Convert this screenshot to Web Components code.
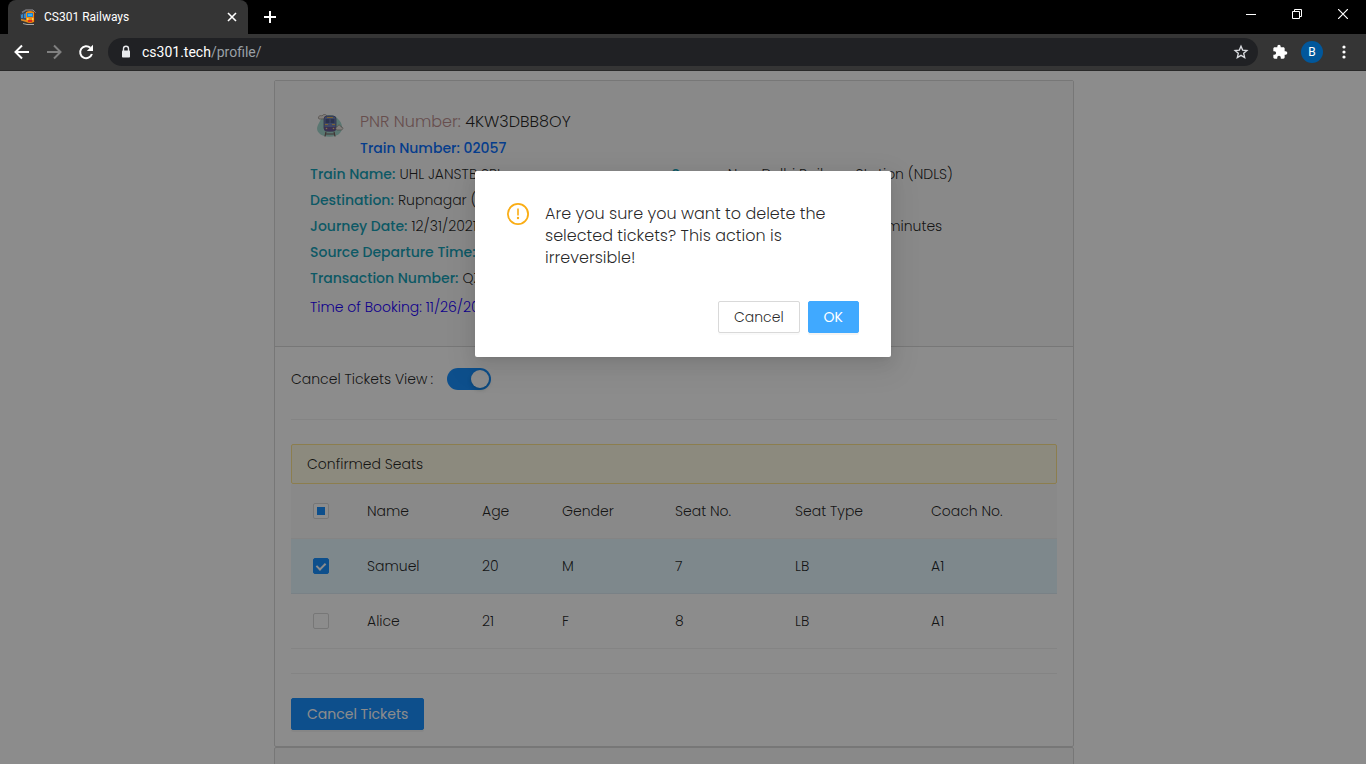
<!DOCTYPE html>
<html lang="en">
<head>
<meta charset="utf-8">
<title>CS301 Railways</title>
<style>
  html, body { margin: 0; height: 100%; overflow: hidden; }
  body { font-family: Poppins, Inter, sans-serif; font-size: 14px; line-height: 22px; font-weight: 300; color: rgba(0,0,0,.85); background: #fff; }
</style>
</head>
<body>
<app-window></app-window>

<template id="t-window">
  <style>
    :host { display: flex; flex-direction: column; height: 100vh; overflow: hidden; }
    .viewport { flex: 1; position: relative; overflow: hidden; display: flex; flex-direction: column; }
  </style>
  <browser-chrome></browser-chrome>
  <div class="viewport">
    <profile-page></profile-page>
    <confirm-dialog>Are you sure you want to delete the selected tickets? This action is irreversible!</confirm-dialog>
  </div>
</template>

<template id="t-chrome">
  <style>
    :host { display: block; background: #000; color: #fff; font-family: "Segoe UI", Roboto, sans-serif; font-size: 12px; font-weight: 400; }
    button { all: unset; display: grid; place-items: center; }
    svg { display: block; }
    .tabs { display: flex; height: 34px; padding-left: 8px; }
    .tab { display: flex; align-items: center; gap: 8px; width: 240px; box-sizing: border-box; padding: 0 8px 0 12px; background: #353535; border-radius: 8px 8px 0 0; }
    .tab span { flex: 1; line-height: 16px; }
    .tab button { width: 16px; height: 16px; }
    .plus { width: 44px; height: 34px; }
    .win { margin-left: auto; display: flex; }
    .win button { width: 46px; height: 28px; }
    .bar { display: flex; align-items: center; height: 36px; background: #353535; border-bottom: 1px solid #292929; padding: 0 6px; }
    .bar > button { width: 32px; height: 32px; }
    .omni { flex: 1; display: flex; align-items: center; height: 28px; margin: 0 6px; padding: 0 8px 0 12px; border-radius: 14px; background: #202124; }
    .url { flex: 1; margin-left: 10px; font-size: 14px; line-height: 20px; color: #9aa0a6; text-decoration: none; }
    .url b { font-weight: 400; color: #fff; }
    .avatar { width: 22px; height: 22px; border-radius: 50%; background: #01579b; display: grid; place-items: center; font-family: Roboto, sans-serif; }
  </style>
  <div class="tabs">
    <div class="tab">
      <svg width="16" height="16" viewBox="0 0 16 16"><path d="M2 3.500 6 1h7" fill="none" stroke="#77777c" stroke-width="1.500"/><path d="M13 1l2.500 3" stroke="#999" fill="none"/><path d="M0 5 6 3v10l-5-2z" fill="#3c4a60"/><path d="M1 6l2-1v4L1 9zM4 5l2-1v5H4z" fill="#3486c8"/><path d="M1 10l5 1v2l-5-1.500z" fill="#d98a25"/><path d="M6 3q4-2 8 0v10q-4 2-8 0z" fill="#ee8a12"/><path d="M7 4h6v4H7z" fill="#1f7fd0"/><path d="M8 5h4v2H8z" fill="#35b5ec"/><path d="M7 9h1.500v2H7zM12 9h1.500v2H12z" fill="#ffd04a"/><path d="M8 11h4v2H8z" fill="#d92c1f"/><path d="M3 14.500l4 1h7" fill="none" stroke="#aaa"/><path d="M14.500 3v10" stroke="#6a2d12"/></svg>
      <span>CS301 Railways</span>
      <button aria-label="Close tab"><svg width="10" height="10" viewBox="0 0 10 10"><path d="M1 1 9 9M9 1 1 9" stroke="#fff" stroke-width="1.6"/></svg></button>
    </div>
    <button class="plus" aria-label="New tab"><svg width="12" height="12" viewBox="0 0 12 12"><path d="M6 0V12M0 6H12" stroke="#fff" stroke-width="2"/></svg></button>
    <div class="win">
      <button aria-label="Minimize"><svg width="10" height="10" viewBox="0 0 10 10"><path d="M0 5.500H10" stroke="#fff"/></svg></button>
      <button aria-label="Restore"><svg width="10" height="10" viewBox="0 0 10 10"><path d="M.5 2.500h7v7h-7zM2.500 2.500V.5h7v7h-2" fill="none" stroke="#fff"/></svg></button>
      <button aria-label="Close"><svg width="10" height="10" viewBox="0 0 10 10"><path d="M0 0 10 10M10 0 0 10" stroke="#fff" stroke-width="1.2"/></svg></button>
    </div>
  </div>
  <div class="bar">
    <button aria-label="Back"><svg width="16" height="16" viewBox="0 0 16 16"><path d="M15 8H2M8 1.500 1.500 8 8 14.500" fill="none" stroke="#fff" stroke-width="2"/></svg></button>
    <button aria-label="Forward"><svg width="16" height="16" viewBox="0 0 16 16"><path d="M1 8H14M8 1.500 14.500 8 8 14.500" fill="none" stroke="#808080" stroke-width="2"/></svg></button>
    <button aria-label="Reload"><svg width="16" height="16" viewBox="0 0 16 16"><path d="M13.900 10A6 6 0 1 1 12.300 3.800" fill="none" stroke="#fff" stroke-width="2"/><path d="M15 .8V7H8.800Z" fill="#fff"/></svg></button>
    <div class="omni">
      <svg width="12" height="14" viewBox="0 0 12 14"><path d="M3.500 6V3.700a2.500 2.500 0 0 1 5 0V6" fill="none" stroke="#e8eaed" stroke-width="1.400"/><rect x="2" y="5.500" width="8" height="7" rx=".8" fill="#e8eaed"/></svg>
      <a class="url" href="#"><b>cs301.tech</b>/profile/</a>
      <button aria-label="Bookmark"><svg width="18" height="18" viewBox="0 0 24 24"><path d="m12 4.200 2.200 5.300 5.700.5-4.300 3.800 1.300 5.600L12 16.400l-4.900 3 1.300-5.600L4.100 10l5.700-.5z" fill="none" stroke="#dadce0" stroke-width="1.800"/></svg></button>
    </div>
    <button aria-label="Extensions"><svg width="16" height="16" viewBox="0 0 24 24"><path fill="#fff" d="M20.500 11H19V7c0-1.100-.9-2-2-2h-4V3.500a2.500 2.500 0 0 0-5 0V5H4c-1.100 0-2 .9-2 2v3.800h1.500a2.700 2.700 0 0 1 0 5.400H2V20c0 1.100.9 2 2 2h3.800v-1.500a2.700 2.700 0 0 1 5.400 0V22H17c1.100 0 2-.9 2-2v-4h1.500a2.500 2.500 0 0 0 0-5z"/></svg></button>
    <button aria-label="Profile"><span class="avatar">B</span></button>
    <button aria-label="Menu"><svg width="4" height="16" viewBox="0 0 4 16"><circle cx="2" cy="3" r="1.600" fill="#fff"/><circle cx="2" cy="8" r="1.600" fill="#fff"/><circle cx="2" cy="13" r="1.600" fill="#fff"/></svg></button>
  </div>
</template>

<template id="t-page">
  <style>
    :host { display: block; padding: 9px 18px 0 0; background: #fff; }
    main { width: 100%; max-width: 800px; margin: 0 auto; }
    hr { border: 0; border-top: 1px solid #f0f0f0; margin: 24px 0; }
    .view { display: flex; align-items: center; gap: 14px; height: 32px; }
    .view label { display: flex; gap: 3px; }
    input { appearance: none; position: relative; width: 44px; height: 22px; margin: 0; border-radius: 11px; background: #1890ff; }
    input::after { content: ""; position: absolute; right: 2px; top: 2px; width: 18px; height: 18px; border-radius: 50%; background: #fff; box-shadow: 0 2px 4px rgba(0,35,11,.2); }
    .next { height: 60px; border: 1px solid #d9d9d9; background: #fafafa; border-radius: 2px 2px 0 0; }
  </style>
  <main>
    <ticket-panel>
      <ticket-summary slot="header"></ticket-summary>
      <div class="view"><label for="sw">Cancel Tickets View<span>:</span></label><input id="sw" type="checkbox" role="switch" checked></div>
      <hr>
      <seat-table></seat-table>
      <hr>
      <ui-button kind="primary">Cancel Tickets</ui-button>
    </ticket-panel>
    <div class="next"></div>
  </main>
</template>

<template id="t-panel">
  <style>
    :host { display: block; border: 1px solid #d9d9d9; border-radius: 2px; }
    header { background: #fafafa; border-bottom: 1px solid #d9d9d9; padding: 28px 40px 26px 35px; }
    section { padding: 16px; }
  </style>
  <header><slot name="header"></slot></header>
  <section><slot></slot></section>
</template>

<template id="t-summary">
  <style>
    :host { display: block; line-height: 26px; }
    .top { display: flex; }
    .top svg { flex: none; width: 38px; height: 38px; margin-right: 12px; }
    .pnr { font-size: 16px; }
    .pnr span { color: #bc8f8f; }
    .train { color: #0a70ff; font-weight: 500; }
    dl { margin: 0; display: grid; grid-template-columns: 1fr 1fr; }
    dl div { display: flex; gap: 4px; white-space: nowrap; }
    dt { color: #17a2b8; font-weight: 500; }
    dd { margin: 0; }
    .full { grid-column: 1 / -1; }
    .booking { color: #1a00ff; line-height: 32px; height: 29px; }
  </style>
  <div class="top">
    <svg viewBox="0 0 38 38"><path d="M10 12C13 5 24 4 28 10c5 4 5 11 2 14-4 5-17 5-21 0-4-4-1-8 1-12z" fill="#a5d9cf"/><path d="M9 10c-2-3 2-4 3-3 2-3 6-1 5 2 0 1-7 1-8 1z" fill="#ece6e0" stroke="#8d8580" stroke-width=".7"/><rect x="14" y="7" width="12" height="15" rx="3" fill="#7383bb" stroke="#565a86" stroke-width=".8"/><path d="M15.500 10h4v4h-4zM20.500 10h4v4h-4z" fill="#4e5c8f"/><path d="M17 8.500h6M15 15.500h3M22 15.500h3" stroke="#e2b65c"/><path d="M14 18h12v3q-6 3-12 0z" fill="#6c5a96"/><circle cx="16.500" cy="19.500" r=".8" fill="#f0cf82"/><circle cx="23.500" cy="19.500" r=".8" fill="#f0cf82"/><path d="M16 22.500l-1 5M24 22.500l1 5M15.500 25h9" stroke="#75605e" stroke-width="1.200"/><path d="M27 21c-2-1-1-3 0-3 1-3 4-2 4 0 3 0 2 3 0 3z" fill="#ece6e0" stroke="#8d8580" stroke-width=".7"/></svg>
    <div><div class="pnr"><span>PNR Number:</span> 4KW3DBB8OY</div><div class="train">Train Number: 02057</div></div>
  </div>
  <dl>
    <div><dt>Train Name:</dt><dd>UHL JANSTB SPL</dd></div>
    <div><dt>Source:</dt><dd>New Delhi Railway Station (NDLS)</dd></div>
    <div class="full"><dt>Destination:</dt><dd>Rupnagar (RPAR)</dd></div>
    <div><dt>Journey Date:</dt><dd>12/31/2021</dd></div>
    <div><dt>Journey Duration:</dt><dd>4 hours &amp; 15 minutes</dd></div>
    <div class="full"><dt>Source Departure Time:</dt><dd>14:35</dd></div>
    <div class="full"><dt>Transaction Number:</dt><dd>QZ7K1</dd></div>
    <div class="full booking">Time of Booking: 11/26/2020</div>
  </dl>
</template>

<template id="t-table">
  <style>
    :host { display: block; }
    .title { background: #fffbe6; border: 1px solid #ffe58f; border-radius: 2px; padding: 8px 15px; }
    table { width: 100%; table-layout: fixed; border-collapse: separate; border-spacing: 0; }
    th, td { font-weight: inherit; text-align: left; padding: 16px; border-bottom: 1px solid #f0f0f0; }
    th { background: #fafafa; }
    th:first-child, td:first-child { padding: 0; text-align: center; }
    tr.on td { background: #e6f7ff; border-color: #dcecf4; }
    input { appearance: none; display: grid; place-items: center; width: 16px; height: 16px; margin: 0 auto; box-sizing: border-box; border: 1px solid #d9d9d9; border-radius: 2px; background: #fff; }
    input.some::before { content: ""; width: 8px; height: 8px; background: #1890ff; }
    input:checked { background: #1890ff; border-color: #1890ff; }
    input:checked::before { content: ""; box-sizing: border-box; width: 6px; height: 9px; border: solid #fff; border-width: 0 2px 2px 0; transform: translateY(-1px) rotate(45deg); }
  </style>
  <div class="title" id="cap">Confirmed Seats</div>
  <table aria-labelledby="cap">
    <colgroup><col style="width:60px"><col style="width:115px"><col style="width:80px"><col style="width:113px"><col style="width:120px"><col style="width:136px"><col style="width:142px"></colgroup>
    <thead><tr><th><input type="checkbox" class="some" aria-label="Select all"></th><th>Name</th><th>Age</th><th>Gender</th><th>Seat No.</th><th>Seat Type</th><th>Coach No.</th></tr></thead>
    <tbody>
      <tr class="on"><td><input type="checkbox" checked aria-label="Select Samuel"></td><td>Samuel</td><td>20</td><td>M</td><td>7</td><td>LB</td><td>A1</td></tr>
      <tr><td><input type="checkbox" aria-label="Select Alice"></td><td>Alice</td><td>21</td><td>F</td><td>8</td><td>LB</td><td>A1</td></tr>
    </tbody>
  </table>
</template>

<template id="t-button">
  <style>
    :host { display: inline-flex; vertical-align: top; }
    button { font: inherit; color: inherit; height: 32px; padding: 0 15px; border: 1px solid #d9d9d9; border-radius: 2px; background: #fff; box-shadow: 0 2px 0 rgba(0,0,0,.02); white-space: nowrap; }
    :host([kind]) button { color: #fff; font-weight: 400; background: #1890ff; border-color: #1890ff; box-shadow: 0 2px 0 rgba(0,0,0,.045); }
    :host([kind="hover"]) button { background: #40a9ff; border-color: #40a9ff; }
  </style>
  <button><slot></slot></button>
</template>

<template id="t-dialog">
  <style>
    :host { position: absolute; inset: 0; background: rgba(0,0,0,.45); }
    .box { box-sizing: border-box; width: 416px; max-width: 100%; margin: 100px auto 0; padding: 32px 32px 24px; background: #fff; border-radius: 2px; box-shadow: 0 3px 6px -4px rgba(0,0,0,.12), 0 6px 16px rgba(0,0,0,.08), 0 9px 28px 8px rgba(0,0,0,.05); }
    .msg { display: flex; gap: 16px; font-size: 16px; }
    .msg svg { flex: none; width: 22px; height: 22px; }
    p { margin: 0; }
    .actions { display: flex; justify-content: flex-end; gap: 8px; margin-top: 32px; }
  </style>
  <div class="box" role="dialog" aria-modal="true">
    <div class="msg">
      <svg viewBox="0 0 22 22"><circle cx="11" cy="11" r="10.100" fill="none" stroke="#faad14" stroke-width="1.800"/><path d="M11 5.500v7" stroke="#faad14" stroke-width="1.600"/><circle cx="11" cy="15" r="1.200" fill="#faad14"/></svg>
      <p><slot></slot></p>
    </div>
    <div class="actions"><ui-button>Cancel</ui-button><ui-button kind="hover">OK</ui-button></div>
  </div>
</template>

<script>
  const define = (name, id) => customElements.define(name, class extends HTMLElement {
    constructor() {
      super();
      this.attachShadow({ mode: 'open' }).append(document.getElementById(id).content.cloneNode(true));
    }
  });
  define('ui-button', 't-button');
  define('seat-table', 't-table');
  define('ticket-summary', 't-summary');
  define('ticket-panel', 't-panel');
  define('profile-page', 't-page');
  define('confirm-dialog', 't-dialog');
  define('browser-chrome', 't-chrome');
  define('app-window', 't-window');
</script>
</body>
</html>
